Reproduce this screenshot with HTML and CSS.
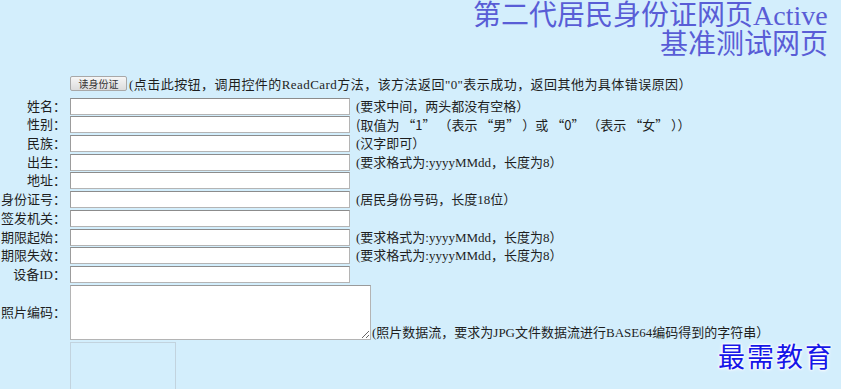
FILE: index.html
```html
<!DOCTYPE html>
<html lang="zh-CN">
<head>
    <meta charset="UTF-8">
    <title>第二代居民身份证网页Active基准测试网页</title>
    <link rel="stylesheet" href="styles.css">
</head>
<body>
    <div class="title">
        <div class="title-line1">第二代居民身份证网页Active</div>
        <div class="title-line2">基准测试网页</div>
    </div>

    <div class="form">
        <div class="label"></div>
        <div class="read-row">
            <button class="read-btn" type="button">读身份证</button>
            <span class="read-note">(点击此按钮，调用控件的ReadCard方法，该方法返回"0"表示成功，返回其他为具体错误原因）</span>
        </div>

        <div class="label">姓名：</div>
        <input class="field" type="text">
        <div class="note">(要求中间，两头都没有空格）</div>

        <div class="label">性别：</div>
        <input class="field" type="text">
        <div class="note cjk">(取值为 “1” （表示 “男” ）或 “0” （表示 “女” ））</div>

        <div class="label">民族：</div>
        <input class="field" type="text">
        <div class="note">(汉字即可）</div>

        <div class="label">出生：</div>
        <input class="field" type="text">
        <div class="note">(要求格式为:yyyyMMdd，长度为8）</div>

        <div class="label">地址：</div>
        <input class="field" type="text">
        <div class="note"></div>

        <div class="label">身份证号：</div>
        <input class="field" type="text">
        <div class="note">(居民身份号码，长度18位）</div>

        <div class="label">签发机关：</div>
        <input class="field" type="text">
        <div class="note"></div>

        <div class="label">期限起始：</div>
        <input class="field" type="text">
        <div class="note">(要求格式为:yyyyMMdd，长度为8）</div>

        <div class="label">期限失效：</div>
        <input class="field" type="text">
        <div class="note">(要求格式为:yyyyMMdd，长度为8）</div>

        <div class="label">设备ID：</div>
        <input class="field" type="text">
        <div class="note"></div>

        <div class="label label-photo">照片编码：</div>
        <div class="photo-row">
            <textarea class="photo-code"></textarea><span class="photo-note">(照片数据流，要求为JPG文件数据流进行BASE64编码得到的字符串）</span>
        </div>

        <div class="label"></div>
        <div class="photo-box"></div>
    </div>

    <div class="watermark">最需教育</div>
</body>
</html>
```

FILE: styles.css
```css
html, body {
    overflow: hidden;
}
body {
    margin: 0;
    background-color: #d3eefc;
    font-family: "Liberation Serif", "Noto Sans CJK SC", serif;
    font-size: 13px;
    color: #1e1e1e;
    height: 389px;
}
.title {
    color: #595dd6;
    font-size: 28px;
    line-height: 29px;
    white-space: nowrap;
    padding-top: 1px;
    margin-bottom: 16px;
}
.title-line1 {
    padding-left: 473px;
}
.title-line2 {
    padding-left: 660px;
}
.form {
    display: grid;
    grid-template-columns: 66px 280px 1fr;
    column-gap: 4px;
    row-gap: 1.7px;
}
.label {
    text-align: right;
    line-height: 17px;
    white-space: nowrap;
}
.label-photo {
    align-self: center;
}
.read-row {
    grid-column: 2 / 4;
    display: flex;
    align-items: center;
    gap: 2px;
    white-space: nowrap;
    height: 17px;
    margin-bottom: 4px;
}
.read-note {
    letter-spacing: 0.45px;
}
.read-btn {
    height: 15px;
    width: 57px;
    padding: 0;
    font-family: "Noto Sans CJK SC", sans-serif;
    font-size: 10px;
    line-height: 13px;
    color: #333;
    background: linear-gradient(#f6f6f6, #dcdcdc);
    border: 1px solid #a8a8a8;
    border-radius: 2px;
}
.field {
    height: 17px;
    width: 280px;
    box-sizing: border-box;
    margin: 0;
    padding: 0 2px;
    border: 1px solid #b4b4b4;
    border-top-color: #8c8c8c;
    border-left-color: #9c9c9c;
    background: #fff;
}
.note {
    line-height: 17px;
    white-space: nowrap;
    padding-left: 2px;
}
.cjk {
    font-family: "Noto Sans CJK SC", sans-serif;
}
.photo-row {
    grid-column: 2 / 4;
    white-space: nowrap;
}
.photo-code {
    width: 301px;
    height: 55px;
    box-sizing: border-box;
    margin: 0;
    border: 1px solid #b4b4b4;
    border-top-color: #9a9a9a;
    vertical-align: bottom;
    background: #fff;
}
.photo-note {
    vertical-align: bottom;
    line-height: 15px;
    padding-left: 1px;
}
.photo-box {
    grid-column: 2 / 3;
    width: 106px;
    height: 48px;
    box-sizing: border-box;
    margin-top: 1px;
    border: 1px solid #c2d3de;
    border-bottom: none;
}
.watermark {
    position: absolute;
    left: 718px;
    top: 338px;
    font-family: "Noto Sans CJK SC", sans-serif;
    font-size: 27px;
    line-height: 36px;
    letter-spacing: 2px;
    color: #1616e8;
    text-shadow: 0 0 2px #fff, 0 0 2px #fff, 0 0 3px #fff, 0 0 4px #fff;
}
```
